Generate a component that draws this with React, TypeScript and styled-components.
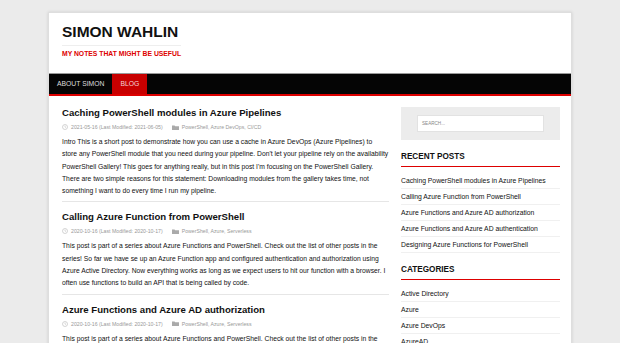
import React from 'react'
import styled, { createGlobalStyle } from 'styled-components'

const GlobalStyle = createGlobalStyle`
  body {
    margin: 0;
    background: #ebebeb;
    font-family: "Liberation Sans", Arial, sans-serif;
  }
`;

const Page = styled.div`
  width: 522px;
  margin: 12px auto 0;
  background: #fff;
  border: 1px solid #dedede;
  box-shadow: 0 0 3px rgba(0, 0, 0, 0.12);
`;

const Header = styled.header`
  padding: 10px 13px 13px;
`;

const TitleBlock = styled.div`
  display: inline-block;
`;

const SiteTitle = styled.h1`
  margin: 0;
  padding-bottom: 4px;
  border-bottom: 1px solid #eee;
  font-size: 15.5px;
  line-height: 18px;
  font-weight: 700;
  color: #111;
`;

const Tagline = styled.p`
  margin: 4px 0 0;
  font-size: 6.8px;
  line-height: 8px;
  font-weight: 700;
  color: #d00;
`;

const Nav = styled.nav`
  display: flex;
  background: #050505;
  border-top: 1px solid #999;
  border-bottom: 2.5px solid #d00;
`;

const NavItem = styled.a<{ active?: boolean }>`
  padding: 0 8px;
  font-size: 6.8px;
  line-height: 20px;
  color: ${({ active }) => (active ? '#f3d6d6' : '#ddd')};
  background: ${({ active }) => (active ? '#c80000' : 'transparent')};
  text-decoration: none;
`;

const Content = styled.div`
  display: flex;
  gap: 12px;
  padding: 11px 12px 20px 13px;
`;

const Main = styled.main`
  width: 327px;
  flex: none;
`;

const Post = styled.article`
  padding-bottom: 4px;
  margin-bottom: 9px;
  border-bottom: 1px solid #e6e6e6;
`;

const PostTitle = styled.h2`
  margin: 0;
  font-size: 9.6px;
  line-height: 12px;
  font-weight: 700;
  color: #111;
`;

const Meta = styled.div`
  display: flex;
  align-items: center;
  gap: 3px;
  margin-top: 4px;
  font-size: 5.2px;
  line-height: 8px;
  color: #999;
`;

const MetaGap = styled.span`
  width: 3px;
`;

const Excerpt = styled.p`
  margin: 5px 0 0;
  font-size: 6.75px;
  line-height: 12.3px;
  color: #111;
`;

const Sidebar = styled.aside`
  width: 159px;
  flex: none;
`;

const SearchPanel = styled.div`
  background: #ececec;
  padding: 8px 16px;
`;

const SearchInput = styled.div`
  height: 15px;
  background: #fff;
  border: 1px solid #e2e2e2;
  padding-left: 4px;
  font-size: 4.6px;
  line-height: 15px;
  color: #888;
`;

const Widget = styled.section`
  margin-top: 12px;
`;

const WidgetTitle = styled.h3`
  margin: 0;
  padding-bottom: 4px;
  border-bottom: 1.5px solid #d00;
  font-size: 8.2px;
  line-height: 10px;
  font-weight: 700;
  color: #111;
`;

const WidgetList = styled.ul`
  list-style: none;
  margin: 6px 0 0;
  padding: 0;
`;

const WidgetItem = styled.li`
  font-size: 6.8px;
  line-height: 15px;
  color: #111;
  border-bottom: 1px solid #f0f0f0;
`;

const Icon = styled.svg`
  flex: none;
`;

const ClockIcon = () => (
  <Icon width="6" height="6" viewBox="0 0 12 12">
    <circle cx="6" cy="6" r="5" fill="none" stroke="#bbb" strokeWidth="1.2" />
    <path d="M6 3v3l2 1.2" fill="none" stroke="#bbb" strokeWidth="1.1" />
  </Icon>
);

const FolderIcon = () => (
  <Icon width="7" height="5" viewBox="0 0 14 10">
    <path d="M0 1h5l1.5 1.5H14V10H0z" fill="#aaa" />
  </Icon>
);

const posts = [
  {
    title: 'Caching PowerShell modules in Azure Pipelines',
    date: '2021-05-16 (Last Modified: 2021-06-05)',
    cats: 'PowerShell, Azure DevOps, CI/CD',
    text:
      "Intro This is a short post to demonstrate how you can use a cache in Azure DevOps (Azure Pipelines) to store any PowerShell module that you need during your pipeline. Don't let your pipeline rely on the availability PowerShell Gallery! This goes for anything really, but in this post I'm focusing on the PowerShell Gallery. There are two simple reasons for this statement: Downloading modules from the gallery takes time, not something I want to do every time I run my pipeline.",
  },
  {
    title: 'Calling Azure Function from PowerShell',
    date: '2020-10-16 (Last Modified: 2020-10-17)',
    cats: 'PowerShell, Azure, Serverless',
    text:
      'This post is part of a series about Azure Functions and PowerShell. Check out the list of other posts in the series! So far we have se up an Azure Function app and configured authentication and authorization using Azure Active Directory. Now everything works as long as we expect users to hit our function with a browser. I often use functions to build an API that is being called by code.',
  },
  {
    title: 'Azure Functions and Azure AD authorization',
    date: '2020-10-16 (Last Modified: 2020-10-17)',
    cats: 'PowerShell, Azure, Serverless',
    text:
      'This post is part of a series about Azure Functions and PowerShell. Check out the list of other posts in the series! So far we have set up an Azure Function app and configured authentication using Azure Active Directory.',
  },
];

const recent = [
  'Caching PowerShell modules in Azure Pipelines',
  'Calling Azure Function from PowerShell',
  'Azure Functions and Azure AD authorization',
  'Azure Functions and Azure AD authentication',
  'Designing Azure Functions for PowerShell',
];

const categories = ['Active Directory', 'Azure', 'Azure DevOps', 'AzureAD', 'CI/CD'];

export default function App() {
  return (
    <>
      <GlobalStyle />
      <Page>
        <Header>
          <TitleBlock>
            <SiteTitle>SIMON WAHLIN</SiteTitle>
            <Tagline>MY NOTES THAT MIGHT BE USEFUL</Tagline>
          </TitleBlock>
        </Header>
        <Nav>
          <NavItem href="#">ABOUT SIMON</NavItem>
          <NavItem href="#" active>BLOG</NavItem>
        </Nav>
        <Content>
          <Main>
            {posts.map(post => (
              <Post key={post.title}>
                <PostTitle>{post.title}</PostTitle>
                <Meta>
                  <ClockIcon />
                  <span>{post.date}</span>
                  <MetaGap />
                  <FolderIcon />
                  <span>{post.cats}</span>
                </Meta>
                <Excerpt>{post.text}</Excerpt>
              </Post>
            ))}
          </Main>
          <Sidebar>
            <SearchPanel>
              <SearchInput>SEARCH...</SearchInput>
            </SearchPanel>
            <Widget>
              <WidgetTitle>RECENT POSTS</WidgetTitle>
              <WidgetList>
                {recent.map(r => (
                  <WidgetItem key={r}>{r}</WidgetItem>
                ))}
              </WidgetList>
            </Widget>
            <Widget>
              <WidgetTitle>CATEGORIES</WidgetTitle>
              <WidgetList>
                {categories.map(c => (
                  <WidgetItem key={c}>{c}</WidgetItem>
                ))}
              </WidgetList>
            </Widget>
          </Sidebar>
        </Content>
      </Page>
    </>
  )
}
